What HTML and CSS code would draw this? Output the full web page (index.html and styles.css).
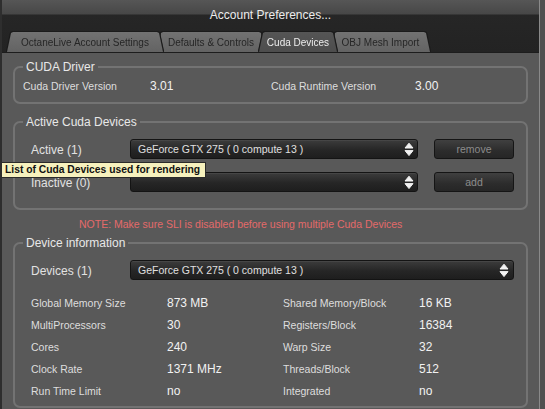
FILE: index.html
```html
<!DOCTYPE html>
<html>
<head>
<meta charset="utf-8">
<link rel="stylesheet" href="styles.css">
</head>
<body>
<div class="window">
  <div class="titlebar">
    <div class="title">Account Preferences...</div>
    <div class="tabs">
      <div class="tab tab-account"><span class="tab-face">OctaneLive Account Settings</span></div>
      <div class="tab tab-defaults"><span class="tab-face">Defaults &amp; Controls</span></div>
      <div class="tab tab-cuda is-active"><span class="tab-face">Cuda Devices</span></div>
      <div class="tab tab-obj"><span class="tab-face">OBJ Mesh Import</span></div>
    </div>
  </div>
  <div class="panel">
    <fieldset class="group group-driver">
      <legend>CUDA Driver</legend>
      <div class="kv-grid driver-grid">
        <span class="key">Cuda Driver Version</span><span class="val">3.01</span>
        <span class="key">Cuda Runtime Version</span><span class="val">3.00</span>
      </div>
    </fieldset>

    <fieldset class="group group-active">
      <legend>Active Cuda Devices</legend>
      <div class="device-row">
        <span class="row-label">Active (1)</span>
        <div class="select select-short">
          <span class="select-text">GeForce GTX 275 ( 0 compute 13 )</span>
          <svg class="updown" width="10" height="15" viewBox="0 0 10 15"><path d="M1 6 L5 1.2 L9 6 Z M1 8.6 L9 8.6 L5 13.6 Z" fill="#f2f2f2" stroke="#f2f2f2" stroke-width="1" stroke-linejoin="round"/></svg>
        </div>
        <button class="btn">remove</button>
      </div>
      <div class="device-row row-gap">
        <span class="row-label">Inactive (0)</span>
        <div class="select select-short">
          <span class="select-text"></span>
          <svg class="updown" width="10" height="15" viewBox="0 0 10 15"><path d="M1 6 L5 1.2 L9 6 Z M1 8.6 L9 8.6 L5 13.6 Z" fill="#f2f2f2" stroke="#f2f2f2" stroke-width="1" stroke-linejoin="round"/></svg>
        </div>
        <button class="btn">add</button>
      </div>
    </fieldset>

    <p class="note">NOTE: Make sure SLI is disabled before using multiple Cuda Devices</p>

    <fieldset class="group group-info">
      <legend>Device information</legend>
      <div class="device-row">
        <span class="row-label">Devices (1)</span>
        <div class="select select-wide">
          <span class="select-text">GeForce GTX 275 ( 0 compute 13 )</span>
          <svg class="updown" width="10" height="15" viewBox="0 0 10 15"><path d="M1 6 L5 1.2 L9 6 Z M1 8.6 L9 8.6 L5 13.6 Z" fill="#f2f2f2" stroke="#f2f2f2" stroke-width="1" stroke-linejoin="round"/></svg>
        </div>
      </div>
      <div class="kv-grid info-grid">
        <span class="key">Global Memory Size</span><span class="val">873 MB</span>
        <span class="key">Shared Memory/Block</span><span class="val">16 KB</span>
        <span class="key">MultiProcessors</span><span class="val">30</span>
        <span class="key">Registers/Block</span><span class="val">16384</span>
        <span class="key">Cores</span><span class="val">240</span>
        <span class="key">Warp Size</span><span class="val">32</span>
        <span class="key">Clock Rate</span><span class="val">1371 MHz</span>
        <span class="key">Threads/Block</span><span class="val">512</span>
        <span class="key">Run Time Limit</span><span class="val">no</span>
        <span class="key">Integrated</span><span class="val">no</span>
      </div>
    </fieldset>
  </div>
  <div class="tooltip">List of Cuda Devices used for rendering</div>
</div>
</body>
</html>
```

FILE: styles.css
```css
* { box-sizing: border-box; }

html, body {
  margin: 0;
  padding: 0;
  background: #505050;
  font-family: "Liberation Sans", Arial, sans-serif;
}

.window {
  position: relative;
  width: 540px;
  height: 409px;
  display: flex;
  flex-direction: column;
  border-left: 2px solid #2e2e2e;
  border-right: 1px solid #8a8a8a;
  background: #595959;
  overflow: hidden;
}

.titlebar {
  height: 52px;
  flex: none;
  background: linear-gradient(#565656 0px, #474747 14px, #262626 15px, #232323 52px);
  display: flex;
  flex-direction: column;
}

.title {
  height: 31px;
  line-height: 31px;
  text-align: center;
  color: #ececec;
  font-size: 12px;
}

.tabs {
  height: 21px;
  display: flex;
  align-items: flex-end;
  padding-left: 5px;
}

.tab {
  height: 20px;
  flex: none;
  filter: drop-shadow(0 -1px 0 #1b1b1b) drop-shadow(1px 0 0 #1b1b1b) drop-shadow(-1px 0 0 #1b1b1b);
}

.tab + .tab { margin-left: -6px; }

.tab-face {
  display: flex;
  align-items: center;
  justify-content: center;
  height: 20px;
  font-size: 10px;
  color: #262626;
  background: linear-gradient(#727272, #636363);
  clip-path: polygon(4px 1px, 6px 0, calc(100% - 6px) 0, calc(100% - 4px) 1px, 100% 100%, 0 100%);
  padding-top: 1px;
}

.tab-account { width: 156px; z-index: 3; }
.tab-defaults { width: 108px; z-index: 2; }
.tab-cuda { width: 78px; z-index: 5; }
.tab-obj { width: 99px; z-index: 1; }

.tab.is-active .tab-face {
  background: linear-gradient(#555555, #4d4d4d);
  color: #ececec;
}

.panel {
  flex: 1;
  border-top: 1px solid #1d1d1d;
  padding: 0 11px;
  background: #595959;
}

.group {
  margin: 0;
  min-width: 0;
  border: 2px solid #737373;
  border-radius: 7px;
  padding: 0 12px 0 8px;
}

.group legend {
  padding: 0 3px;
  font-size: 12px;
  line-height: 14px;
  color: #e8e8e8;
}

.group-driver {
  margin-top: 7px;
  padding-top: 5px;
  padding-bottom: 9px;
}

.group-active {
  margin-top: 11px;
  padding-top: 10px;
  padding-bottom: 16px;
}

.group-info {
  margin-top: 5px;
  padding-top: 10px;
  padding-bottom: 4px;
}

.kv-grid {
  display: grid;
  align-items: center;
}

.driver-grid {
  grid-template-columns: 127px 121px 144px 1fr;
  grid-auto-rows: 14px;
}

.info-grid {
  margin-left: 8px;
  margin-top: 12px;
  grid-template-columns: 136px 116px 136px 1fr;
  grid-auto-rows: 22px;
}

.key {
  font-size: 10.5px;
  color: #dedede;
  white-space: nowrap;
}

.val {
  font-size: 12px;
  color: #f2f2f2;
  white-space: nowrap;
}

.device-row {
  display: flex;
  align-items: center;
  height: 20px;
  margin-left: 8px;
}

.row-gap { margin-top: 13px; }

.row-label {
  width: 99px;
  flex: none;
  font-size: 12px;
  color: #e2e2e2;
  padding-top: 2px;
}

.select {
  height: 20px;
  display: flex;
  align-items: center;
  justify-content: space-between;
  padding: 0 3px 0 7px;
  border: 1px solid #141414;
  border-radius: 3px;
  background: linear-gradient(#3c3c3c, #262626 55%, #1e1e1e);
  box-shadow: inset 0 1px 0 rgba(255,255,255,0.06);
}

.select-short { width: 288px; flex: none; }
.select-wide { flex: 1; padding-right: 4px; }

.select-text {
  font-size: 10.5px;
  color: #e0e0e0;
  white-space: nowrap;
}

.updown { flex: none; display: block; }

.btn {
  margin: 0 0 0 16px;
  width: 80px;
  height: 20px;
  flex: none;
  padding: 0;
  border: 1px solid #151515;
  border-radius: 3px;
  background: linear-gradient(#404040, #2c2c2c 60%, #262626);
  color: #8c8c8c;
  font-family: "Liberation Sans", Arial, sans-serif;
  font-size: 10.5px;
}

.note {
  margin: 7px 0 0 66px;
  line-height: 14px;
  font-size: 10.5px;
  color: #e46a6a;
  white-space: nowrap;
}

.tooltip {
  position: absolute;
  left: -2px;
  top: 162px;
  width: 206px;
  height: 16px;
  line-height: 14px;
  padding-left: 4px;
  background: #f6f1bd;
  border: 1px solid #2a2a2a;
  color: #111;
  font-weight: bold;
  font-size: 10.3px;
  white-space: nowrap;
}
```
